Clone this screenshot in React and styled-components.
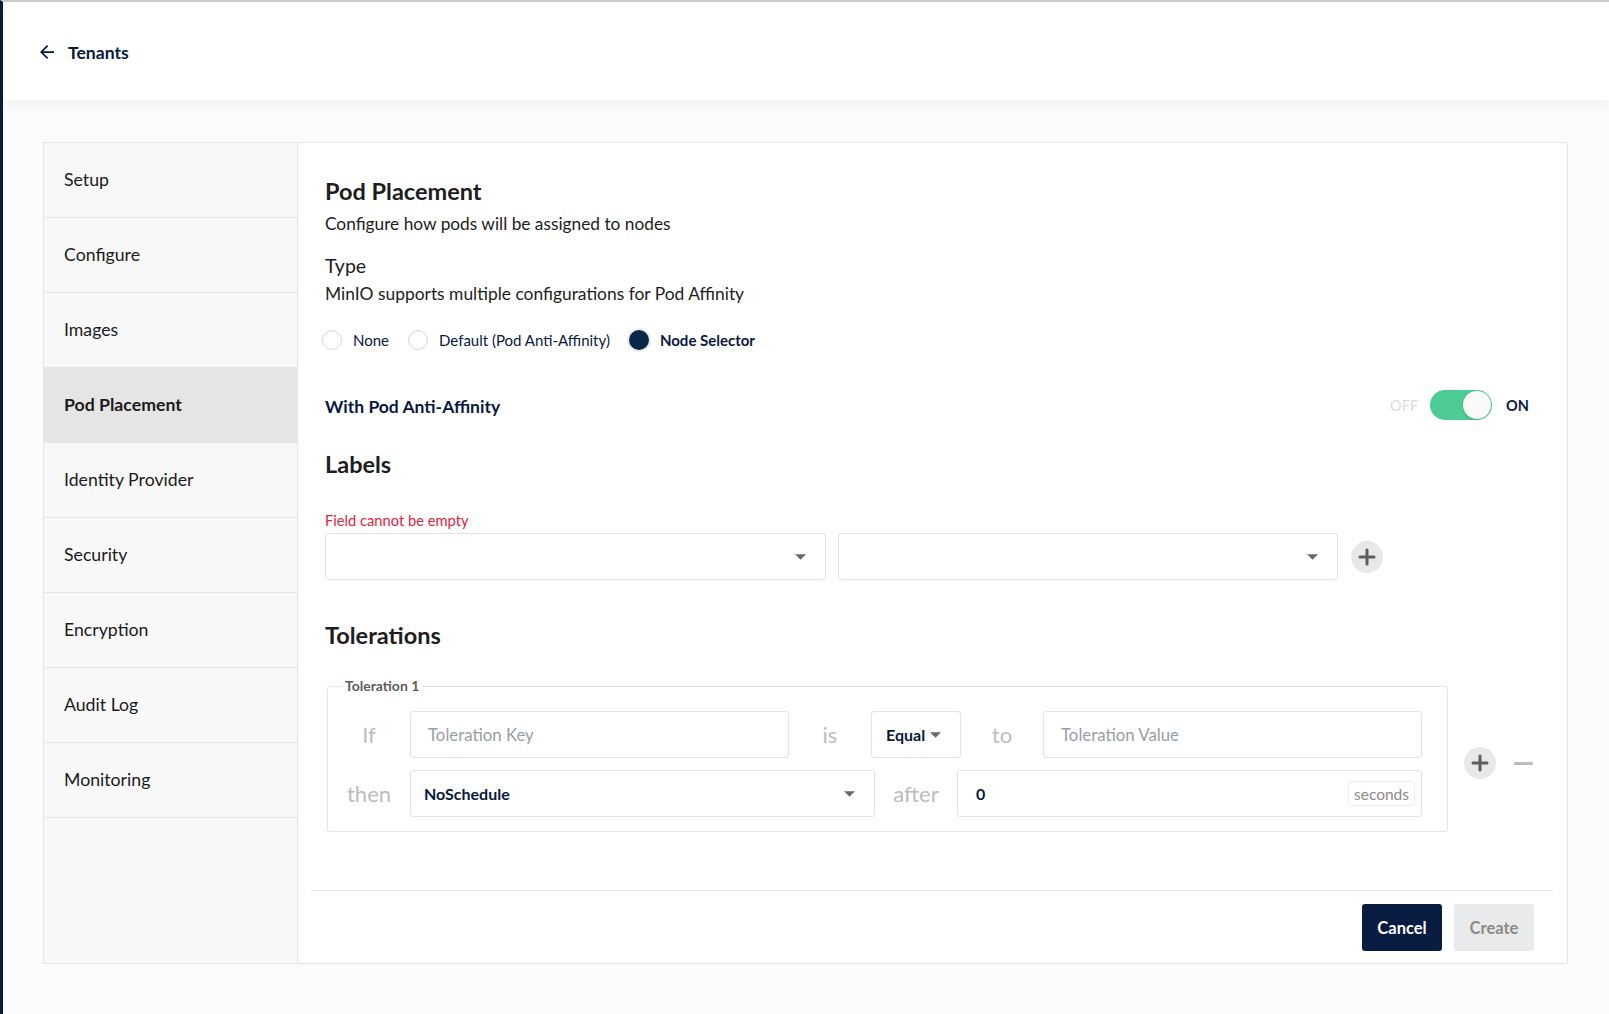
import React from 'react';
import styled, { createGlobalStyle } from 'styled-components';

const GlobalStyle = createGlobalStyle`
  * { box-sizing: border-box; }
  body {
    margin: 0;
    font-family: Lato, "Noto Sans", sans-serif;
    background: #fbfbfb;
  }
`;

const steps = [
  'Setup',
  'Configure',
  'Images',
  'Pod Placement',
  'Identity Provider',
  'Security',
  'Encryption',
  'Audit Log',
  'Monitoring',
];

const ArrowBack = () => (
  <svg width="14" height="14" viewBox="4 4 16 16">
    <path d="M20 11H7.83l5.59-5.59L12 4l-8 8 8 8 1.41-1.41L7.83 13H20v-2z" fill="#07193e" />
  </svg>
);

const Caret = () => (
  <svg width="11" height="6" viewBox="0 0 10 5">
    <path d="M0 0h10L5 5z" fill="#6b6b6b" />
  </svg>
);

const PlusIcon = () => (
  <svg width="18" height="18" viewBox="0 0 18 18">
    <path d="M9 2v14M2 9h14" stroke="#5c5c5c" strokeWidth="3" strokeLinecap="round" />
  </svg>
);

const App = () => {
  return (
    <>
      <GlobalStyle />
      <Page>
        <Header>
          <BackLink>
            <ArrowBack />
            <span>Tenants</span>
          </BackLink>
        </Header>
        <Body>
          <Card>
            <Sidebar>
              {steps.map((step) => (
                <Step key={step} active={step === 'Pod Placement'}>
                  {step}
                </Step>
              ))}
            </Sidebar>
            <Content>
              <Form>
                <Title>Pod Placement</Title>
                <Subtitle>Configure how pods will be assigned to nodes</Subtitle>
                <TypeTitle>Type</TypeTitle>
                <TypeHint>MinIO supports multiple configurations for Pod Affinity</TypeHint>
                <RadioRow>
                  <RadioOption>
                    <Radio />
                    None
                  </RadioOption>
                  <RadioOption>
                    <Radio />
                    Default (Pod Anti-Affinity)
                  </RadioOption>
                  <RadioOption checked>
                    <Radio checked />
                    Node Selector
                  </RadioOption>
                </RadioRow>
                <ToggleRow>
                  <ToggleLabel>With Pod Anti-Affinity</ToggleLabel>
                  <ToggleGroup>
                    <ToggleText>OFF</ToggleText>
                    <Track>
                      <Knob />
                    </Track>
                    <ToggleText on>ON</ToggleText>
                  </ToggleGroup>
                </ToggleRow>
                <SectionTitle>Labels</SectionTitle>
                <ErrorText>Field cannot be empty</ErrorText>
                <LabelRow>
                  <Select width={501}>
                    <span />
                    <Caret />
                  </Select>
                  <Select width={500}>
                    <span />
                    <Caret />
                  </Select>
                  <RoundButton>
                    <PlusIcon />
                  </RoundButton>
                </LabelRow>
                <SectionTitle top={41}>Tolerations</SectionTitle>
                <TolerationRow>
                  <Fieldset>
                    <Legend>Toleration 1</Legend>
                    <FieldRow>
                      <Word width={71}>If</Word>
                      <Input width={379} placeholder="Toleration Key" />
                      <Word width={82}>is</Word>
                      <Select width={90} pad={14}>
                        <SelectValue>Equal</SelectValue>
                        <Caret />
                      </Select>
                      <Word width={82}>to</Word>
                      <Input width={379} placeholder="Toleration Value" />
                    </FieldRow>
                    <FieldRow>
                      <Word width={71}>then</Word>
                      <Select width={465} pad={13}>
                        <SelectValue>NoSchedule</SelectValue>
                        <Caret />
                      </Select>
                      <Word width={82}>after</Word>
                      <InputBox width={465}>
                        <InputValue>0</InputValue>
                        <Adornment>seconds</Adornment>
                      </InputBox>
                    </FieldRow>
                  </Fieldset>
                  <RowActions>
                    <RoundButton>
                      <PlusIcon />
                    </RoundButton>
                    <MinusButton />
                  </RowActions>
                </TolerationRow>
              </Form>
              <Footer>
                <Button primary>Cancel</Button>
                <Button>Create</Button>
              </Footer>
            </Content>
          </Card>
        </Body>
      </Page>
    </>
  );
};

const Page = styled.div`
  min-height: 100vh;
  border-top: 2px solid #cdcdcd;
  border-left: 3px solid #081c42;
`;

const Header = styled.header`
  height: 98px;
  background: #ffffff;
  display: flex;
  align-items: center;
  padding-left: 37px;
  padding-top: 2px;
  box-shadow: 0 3px 12px rgba(0, 0, 0, 0.05);
`;

const BackLink = styled.div`
  display: flex;
  align-items: center;
  gap: 14px;
  font-size: 17.6px;
  font-weight: 700;
  color: #07193e;
`;

const Body = styled.main`
  padding: 42px 41px 0 40px;
`;

const Card = styled.div`
  display: flex;
  height: 822px;
  background: #ffffff;
  border: 1px solid #e5e5e5;
`;

const Sidebar = styled.nav`
  width: 254px;
  flex-shrink: 0;
  background: #f8f8f8;
  border-right: 1px solid #e5e5e5;
`;

const Step = styled.div`
  height: 75px;
  display: flex;
  align-items: center;
  padding-left: 20px;
  padding-bottom: 1px;
  border-bottom: 1px solid #e5e5e5;
  font-size: 17.7px;
  color: #1b1b1b;
  font-weight: ${(p) => (p.active ? 700 : 400)};
  background: ${(p) => (p.active ? '#e5e5e5' : 'transparent')};
`;

const Content = styled.section`
  flex: 1;
  min-width: 0;
  display: flex;
  flex-direction: column;
`;

const Form = styled.div`
  flex: 1;
  padding: 34px 38px 0 27px;
`;

const Title = styled.h2`
  margin: 0;
  font-size: 23.5px;
  line-height: 28px;
  font-weight: 700;
  color: #1d1d1d;
`;

const Subtitle = styled.div`
  margin-top: 9px;
  font-size: 17.3px;
  line-height: 20px;
  color: #1d1d1d;
`;

const TypeTitle = styled.div`
  margin-top: 21px;
  font-size: 19.5px;
  line-height: 22px;
  color: #1d1d1d;
`;

const TypeHint = styled.div`
  margin-top: 7px;
  font-size: 17.4px;
  line-height: 20px;
  color: #1d1d1d;
`;

const RadioRow = styled.div`
  margin-top: 24px;
  margin-left: -3px;
  display: flex;
  align-items: center;
  gap: 19px;
  height: 24px;
`;

const RadioOption = styled.label`
  display: flex;
  align-items: center;
  gap: 11px;
  font-size: 15px;
  color: #07193e;
  font-weight: ${(p) => (p.checked ? 700 : 400)};
`;

const Radio = styled.span`
  width: 20px;
  height: 20px;
  border-radius: 50%;
  border: ${(p) => (p.checked ? 'none' : '1px solid #d9d9d9')};
  background: ${(p) => (p.checked ? '#0a2748' : '#ffffff')};
  box-shadow: ${(p) =>
    p.checked ? '0 0 0 2px #ececec' : 'inset 0 1px 2px rgba(0, 0, 0, 0.06)'};
`;

const ToggleRow = styled.div`
  margin-top: 39px;
  height: 30px;
  display: flex;
  align-items: center;
  justify-content: space-between;
`;

const ToggleLabel = styled.div`
  font-size: 17.5px;
  font-weight: 700;
  color: #07193e;
`;

const ToggleGroup = styled.div`
  display: flex;
  align-items: center;
  gap: 12px;
  margin-top: -2px;
`;

const ToggleText = styled.span`
  font-size: 14.5px;
  font-weight: ${(p) => (p.on ? 700 : 400)};
  color: ${(p) => (p.on ? '#07193e' : '#dcdcdc')};
  margin-left: ${(p) => (p.on ? '2px' : '0')};
`;

const Track = styled.div`
  width: 62px;
  height: 30px;
  border-radius: 15px;
  background: #4ccb92;
  display: flex;
  align-items: center;
  justify-content: flex-end;
  padding-right: 1px;
`;

const Knob = styled.div`
  width: 28px;
  height: 28px;
  border-radius: 50%;
  background: #fafafa;
  box-shadow: 0 1px 2px rgba(0, 0, 0, 0.2);
`;

const SectionTitle = styled.h3`
  margin: ${(p) => p.top || 29}px 0 0;
  font-size: 23.5px;
  line-height: 28px;
  font-weight: 700;
  color: #1d1d1d;
`;

const ErrorText = styled.div`
  margin-top: 33px;
  font-size: 14.7px;
  line-height: 18px;
  color: #e2243d;
`;

const LabelRow = styled.div`
  margin-top: 4px;
  display: flex;
  align-items: center;
  gap: 12px;
`;

const Select = styled.div`
  width: ${(p) => p.width}px;
  height: 47px;
  flex-shrink: 0;
  display: flex;
  align-items: center;
  justify-content: space-between;
  padding: 0 19px 0 ${(p) => p.pad || 14}px;
  border: 1px solid #e3e3e3;
  border-radius: 3px;
  background: #ffffff;
`;

const SelectValue = styled.span`
  font-size: 16px;
  font-weight: 700;
  color: #07193e;
`;

const RoundButton = styled.div`
  width: 32px;
  height: 32px;
  margin-left: 1px;
  flex-shrink: 0;
  border-radius: 50%;
  background: #e8e8e8;
  display: flex;
  align-items: center;
  justify-content: center;
`;

const MinusButton = styled.div`
  width: 19px;
  height: 3px;
  border-radius: 1px;
  background: #bdbdbd;
`;

const TolerationRow = styled.div`
  margin-top: 28px;
  margin-left: 2px;
  display: flex;
`;

const Fieldset = styled.fieldset`
  margin: 0;
  width: 1121px;
  padding: 16px 25px 14px 11px;
  border: 1px solid #e5e5e5;
  border-radius: 3px;
  display: flex;
  flex-direction: column;
  gap: 12px;
`;

const Legend = styled.legend`
  margin-left: 3px;
  padding: 0 3px;
  font-size: 14px;
  line-height: 18px;
  font-weight: 700;
  color: #5b5b5b;
`;

const FieldRow = styled.div`
  display: flex;
  align-items: center;
`;

const Word = styled.span`
  width: ${(p) => p.width}px;
  flex-shrink: 0;
  text-align: center;
  font-size: 22px;
  color: #bcbcbc;
  padding-right: ${(p) => (p.width === 71 ? '11px' : '0')};
`;

const Input = styled.input`
  width: ${(p) => p.width}px;
  height: 47px;
  flex-shrink: 0;
  padding: 0 17px;
  border: 1px solid #e3e3e3;
  border-radius: 3px;
  font-family: Lato, "Noto Sans", sans-serif;
  font-size: 16.8px;
  color: #07193e;
  outline: none;
  &::placeholder {
    color: #9a9da6;
  }
`;

const InputBox = styled.div`
  width: ${(p) => p.width}px;
  height: 47px;
  flex-shrink: 0;
  display: flex;
  align-items: center;
  justify-content: space-between;
  padding: 0 6px 0 18px;
  border: 1px solid #e3e3e3;
  border-radius: 3px;
`;

const InputValue = styled.span`
  font-size: 16px;
  font-weight: 700;
  color: #07193e;
`;

const Adornment = styled.span`
  height: 25px;
  padding: 0 5px;
  display: flex;
  align-items: center;
  border: 1px solid #efefef;
  border-radius: 3px;
  font-size: 15.5px;
  color: #8a8a8a;
`;

const RowActions = styled.div`
  display: flex;
  align-items: center;
  gap: 18px;
  margin-left: 15px;
  margin-top: 17px;
`;

const Footer = styled.footer`
  margin: 0 14px 0 13px;
  border-top: 1px solid #e5e5e5;
  padding: 13px 19px 12px 0;
  display: flex;
  justify-content: flex-end;
  gap: 12px;
`;

const Button = styled.button`
  width: 80px;
  height: 47px;
  border: none;
  border-radius: 3px;
  font-family: Lato, "Noto Sans", sans-serif;
  font-size: 16.5px;
  font-weight: 700;
  background: ${(p) => (p.primary ? '#081c42' : '#e8eaeb')};
  color: ${(p) => (p.primary ? '#ffffff' : '#8a8a8a')};
`;

export default App;
